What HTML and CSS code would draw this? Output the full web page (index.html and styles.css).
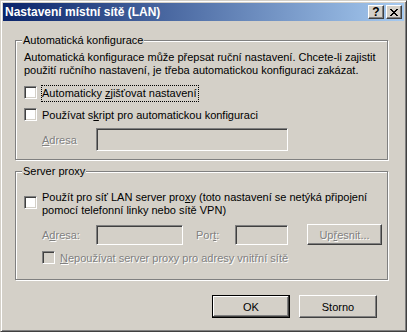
FILE: index.html
```html
<!DOCTYPE html>
<html lang="cs">
<head>
    <meta charset="UTF-8">
    <title>Nastavení místní sítě (LAN)</title>
    <link rel="stylesheet" href="styles.css">
</head>
<body>
    <div class="window">
        <div class="titlebar">
            <span class="title">Nastavení místní sítě (LAN)</span>
            <div class="caption-buttons">
                <span class="cap-btn help">?</span>
                <span class="cap-btn">
                    <svg width="8" height="7" viewBox="0 0 8 7"><path d="M0 0h2v1H0zM6 0h2v1H6zM1 1h2v1H1zM5 1h2v1H5zM2 2h4v1H2zM3 3h2v1H3zM2 4h4v1H2zM1 5h2v1H1zM5 5h2v1H5zM0 6h2v1H0zM6 6h2v1H6z" fill="#000"/></svg>
                </span>
            </div>
        </div>

        <div class="client">
            <div class="group group-auto">
                <span class="group-title">Automatická konfigurace</span>
                <p class="desc">Automatická konfigurace může přepsat ruční nastavení. Chcete-li zajistit<br>použití ručního nastavení, je třeba automatickou konfiguraci zakázat.</p>

                <div class="check-row first">
                    <span class="box"></span>
                    <span class="label focused">Automaticky <u>z</u>jišťovat nastavení</span>
                </div>
                <div class="check-row second">
                    <span class="box"></span>
                    <span class="label">Používat s<u>k</u>ript pro automatickou konfiguraci</span>
                </div>
                <div class="field-row script-row">
                    <span class="field-label disabled"><u>A</u>dresa</span>
                    <span class="input input-script"></span>
                </div>
            </div>

            <div class="group group-proxy">
                <span class="group-title">Server proxy</span>
                <div class="check-row multi">
                    <span class="box"></span>
                    <span class="label">Použít pro síť LAN server pro<u>x</u>y (toto nastavení se netýká připojení<br>pomocí telefonní linky nebo sítě VPN)</span>
                </div>
                <div class="field-row proxy-row">
                    <span class="field-label disabled">A<u>d</u>resa:</span>
                    <span class="input input-address"></span>
                    <span class="field-label port-label disabled">Por<u>t</u>:</span>
                    <span class="input input-port"></span>
                    <span class="button advanced disabled">Up<u>ř</u>esnit...</span>
                </div>
                <div class="check-row bypass">
                    <span class="box box-disabled"></span>
                    <span class="label disabled"><u>N</u>epoužívat server proxy pro adresy vnitřní sítě</span>
                </div>
            </div>

            <div class="actions">
                <span class="button default">OK</span>
                <span class="button">Storno</span>
            </div>
        </div>
    </div>
</body>
</html>
```

FILE: styles.css
```css
body {
    margin: 0;
    background: #d4d0c8;
    font-family: "Liberation Sans", Arial, sans-serif;
    font-size: 11px;
    color: #000;
}

.window {
    width: 407px;
    height: 332px;
    box-sizing: border-box;
    border: 1px solid;
    border-color: #d4d0c8 #404040 #404040 #d4d0c8;
    box-shadow: inset 1px 1px #fff, inset -1px -1px #808080;
    padding: 2px;
    display: flex;
    flex-direction: column;
    background: #d4d0c8;
}

/* Title bar */
.titlebar {
    height: 18px;
    display: flex;
    align-items: center;
    padding: 0 2px 0 2px;
    background: linear-gradient(to right, #0a246a, #a6caf0);
    color: #fff;
    font-weight: bold;
    font-size: 12px;
}

.title {
    flex: 1;
    white-space: nowrap;
}

.caption-buttons {
    display: flex;
    gap: 2px;
}

.cap-btn {
    width: 16px;
    height: 14px;
    box-sizing: border-box;
    display: flex;
    align-items: center;
    justify-content: center;
    border: 1px solid;
    border-color: #fff #404040 #404040 #fff;
    box-shadow: inset -1px -1px #808080, inset 1px 1px #d4d0c8;
    background: #d4d0c8;
    color: #000;
}

.cap-btn.help {
    font-weight: bold;
    font-size: 12px;
    line-height: 12px;
}

/* Client area */
.client {
    flex: 1;
    display: flex;
    flex-direction: column;
    padding: 19px 15px 0 12px;
}

.group {
    position: relative;
    width: 373px;
    box-sizing: border-box;
    border: 1px solid #808080;
    box-shadow: inset 1px 1px #fff, 1px 1px #fff;
    padding-left: 8px;
}

.group-auto {
    height: 120px;
    padding-top: 10px;
}

.group-proxy {
    height: 109px;
    margin-top: 11px;
    padding-top: 18px;
}

.group-title {
    position: absolute;
    top: -7px;
    left: 6px;
    padding: 0 1px;
    line-height: 13px;
    background: #d4d0c8;
}

.desc {
    margin: 0;
    line-height: 13px;
    white-space: nowrap;
}

/* Checkboxes */
.check-row {
    display: flex;
    align-items: flex-start;
}

.check-row.first { margin-top: 8px; }
.check-row.second { margin-top: 5px; }
.check-row.bypass { margin-top: 5px; padding-left: 18px; }

.box {
    width: 13px;
    height: 13px;
    box-sizing: border-box;
    flex: none;
    margin-top: 1px;
    margin-right: 4px;
    border: 1px solid;
    border-color: #808080 #fff #fff #808080;
    box-shadow: inset 1px 1px #404040, inset -1px -1px #d4d0c8;
    background: #fff;
}

.box-disabled {
    background: #d4d0c8;
}

.check-row.multi .box {
    margin-top: 6px;
}

.label {
    border: 1px solid transparent;
    padding: 0 1px 0 0;
    line-height: 15px;
    white-space: nowrap;
}

.label.focused {
    border: 1px dotted #000;
}

.check-row.multi .label {
    line-height: 13px;
}

.disabled {
    color: #808080;
    text-shadow: 1px 1px #fff;
}

/* Text fields */
.field-row {
    display: flex;
    align-items: center;
    padding-left: 18px;
}

.script-row { margin-top: 4px; }
.proxy-row { margin-top: 6px; }

.field-label {
    width: 54px;
    flex: none;
    white-space: nowrap;
}

.port-label {
    width: 39px;
    margin-left: 13px;
}

.input {
    box-sizing: border-box;
    border: 1px solid;
    border-color: #808080 #fff #fff #808080;
    box-shadow: inset 1px 1px #404040, inset -1px -1px #d4d0c8;
    background: #d4d0c8;
}

.input-script { width: 192px; height: 23px; }
.input-address { width: 87px; height: 20px; }
.input-port { width: 53px; height: 20px; }

/* Push buttons */
.button {
    width: 78px;
    height: 23px;
    box-sizing: border-box;
    display: flex;
    align-items: center;
    justify-content: center;
    border: 1px solid;
    border-color: #fff #404040 #404040 #fff;
    box-shadow: inset -1px -1px #808080, inset 1px 1px #d4d0c8;
    background: #d4d0c8;
}

.button.default {
    border-color: #000;
    box-shadow: inset -1px -1px #404040, inset 1px 1px #fff, inset -2px -2px #808080, inset 2px 2px #d4d0c8;
}

.button.advanced {
    width: 75px;
    height: 21px;
    margin-left: 19px;
}

.actions {
    display: flex;
    justify-content: flex-end;
    gap: 9px;
    margin-top: 15px;
    margin-right: 12px;
}
```
